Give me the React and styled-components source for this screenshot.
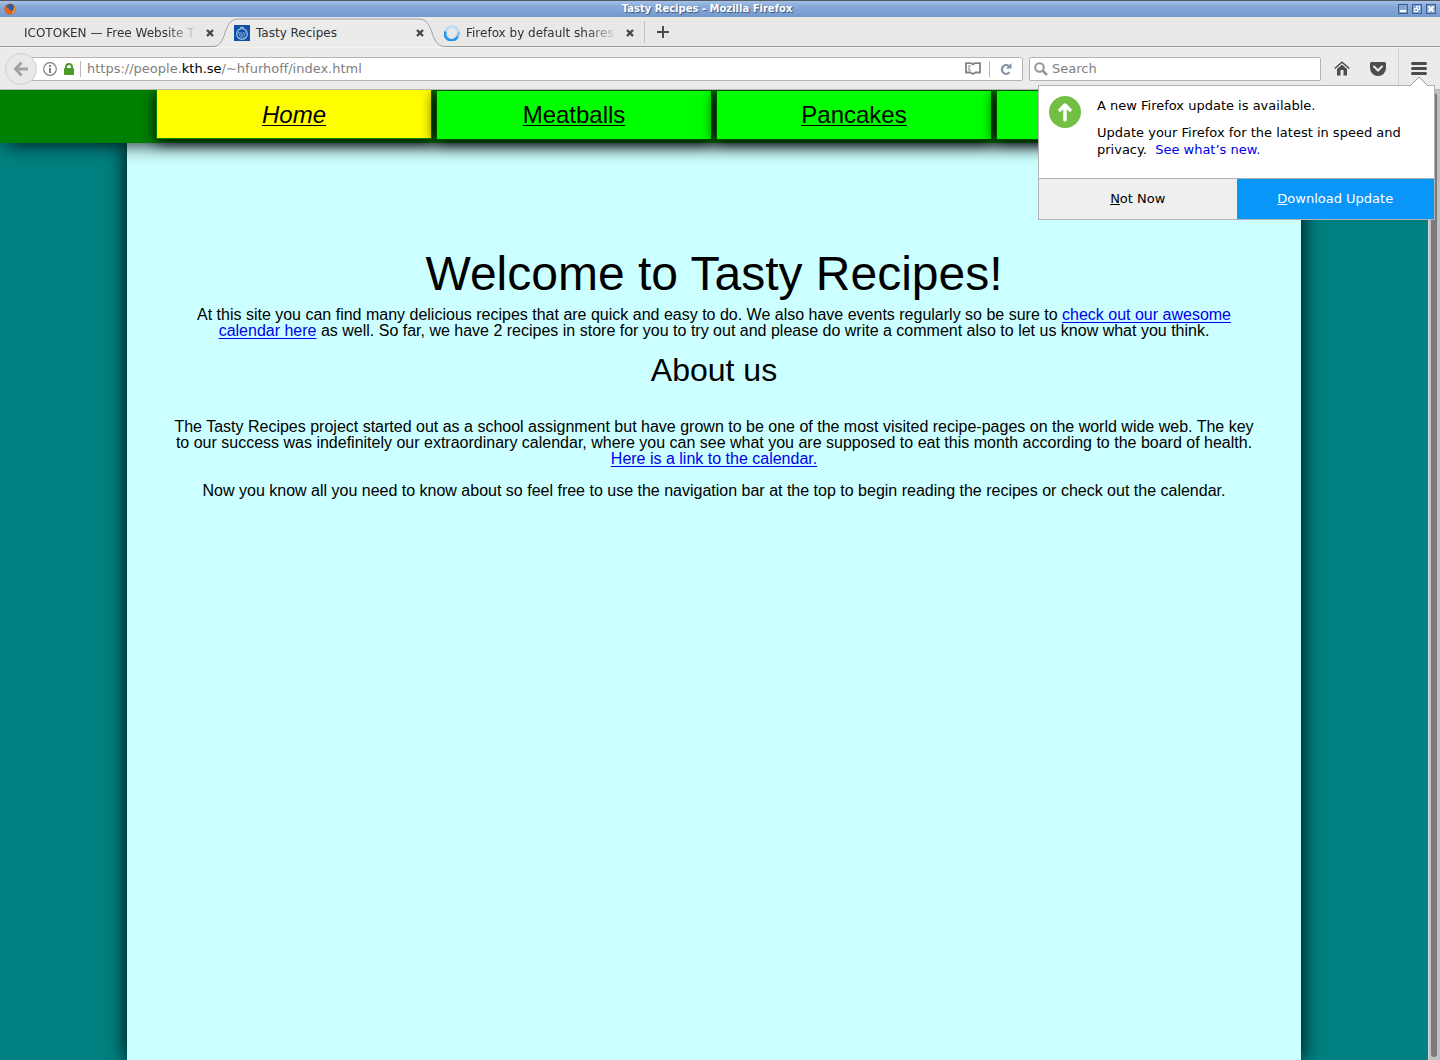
import React from 'react';
import styled, { createGlobalStyle, css } from 'styled-components';

const GlobalStyle = createGlobalStyle`
  *, *::before, *::after { box-sizing: border-box; }
  body { margin: 0; }
  button, input { font: inherit; color: inherit; margin: 0; }
`;

const Window = styled.div`
  display: flex;
  flex-direction: column;
  min-height: 100vh;
  background: #ebebe9;
  font: 13px/17px 'DejaVu Sans', sans-serif;
  color: #2e3436;
`;

const TitleBar = styled.header`
  display: flex;
  align-items: center;
  height: 17px;
  padding: 0 4px;
  border-top: 1px solid #54585f;
  background: linear-gradient(#a4c2ea, #8aabd9 30%, #7399cd);
`;

const WindowTitle = styled.h1`
  flex: 1;
  margin: 0;
  text-align: center;
  font: bold 10px/16px 'DejaVu Sans', sans-serif;
  color: #fff;
  text-shadow: 1px 1px 1px #3b5680;
`;

const WindowButtons = styled.div`
  display: flex;
  gap: 4px;
`;

const WindowButton = styled.button`
  display: flex;
  width: 10px;
  height: 10px;
  padding: 0;
  border: 0;
  background: none;
`;

const TabStrip = styled.div`
  display: flex;
  height: 30px;
  padding-left: 14px;
  border-bottom: 1px solid #9c9c9a;
  background: #e8e8e6;
  font-size: 12px;
`;

const Tab = styled.div`
  position: relative;
  display: flex;
  align-items: center;
  gap: 6px;
  width: 210px;
  padding: 3px 8px 0 10px;
`;

const TabShape = styled.svg`
  position: absolute;
  top: 1px;
  left: -11px;
  width: 232px;
  height: 30px;
`;

const TabLabel = styled.button`
  position: relative;
  flex: 1;
  min-width: 0;
  padding: 0;
  border: 0;
  background: none;
  white-space: nowrap;
  text-align: left;
  ${({ $faded }) => $faded && css`mask-image: linear-gradient(to left, transparent, #000 32px);`}
`;

const IconSlot = styled.span`
  position: relative;
  display: flex;
  flex: none;
`;

const BareButton = styled.button`
  position: relative;
  display: flex;
  align-items: center;
  justify-content: center;
  flex: none;
  width: ${({ $width }) => $width}px;
  padding: 0;
  border: 0;
  background: none;
`;

const NewTabArea = styled.div`
  display: flex;
  align-items: center;
  align-self: center;
  height: 22px;
  border-left: 1px solid #c0c0be;
`;

const Toolbar = styled.div`
  position: relative;
  display: flex;
  align-items: center;
  height: 43px;
  padding: 0 1px 0 5px;
  border-top: 1px solid #f4f4f3;
  border-bottom: 1px solid #b5b5b3;
`;

const BackButton = styled.button`
  position: relative;
  display: flex;
  align-items: center;
  justify-content: center;
  flex: none;
  width: 32px;
  height: 32px;
  padding: 0;
  border: 1px solid #cfcfcd;
  border-radius: 50%;
  background: #e9e9e7;
`;

const Field = styled.div`
  display: flex;
  align-items: center;
  height: 24px;
  border: 1px solid #b4b4b2;
  border-radius: 2px;
  background: #fff;
`;

const AddressField = styled(Field)`
  flex: 1;
  margin-left: -8px;
  padding: 0 4px 0 12px;
  gap: 4px;
`;

const Divider = styled.span`
  width: 1px;
  height: 16px;
  background: #b8b8b6;
`;

const Address = styled.a`
  flex: 1;
  padding-left: 2px;
  color: #7f7f7f;
  text-decoration: none;
`;

const Host = styled.span`
  color: #000;
`;

const SearchField = styled(Field)`
  width: 292px;
  margin: 0 5px 0 6px;
  padding: 0 4px;
  gap: 4px;
`;

const SearchInput = styled.input`
  flex: 1;
  min-width: 0;
  padding: 0;
  border: 0;
  outline: 0;
  background: none;
  &::placeholder { color: #7f7f7f; opacity: 1; }
`;

const MenuSlot = styled.div`
  display: flex;
  align-self: stretch;
  border-left: 1px solid #d2d2d0;
`;

const UpdatePanel = styled.section`
  position: absolute;
  z-index: 10;
  top: 37px;
  right: 5px;
  width: 397px;
  border: 1px solid #b2b2b2;
  background: #fff;
  color: #000;
`;

const PanelArrow = styled.svg`
  position: absolute;
  top: -10px;
  right: 5px;
  width: 20px;
  height: 11px;
`;

const PanelBody = styled.div`
  display: flex;
  gap: 16px;
  height: 92px;
  padding: 10px;
`;

const PanelText = styled.div`
  flex: 1;

  p { margin: 1px 0 10px; }
`;

const PanelLink = styled.a`
  margin-left: 4px;
  color: #0000ee;
  text-decoration: none;
`;

const PanelActions = styled.div`
  display: flex;
  border-top: 1px solid #b2b2b2;
`;

const PanelButton = styled.button`
  flex: 1;
  height: 40px;
  padding: 0 0 2px;
  border: 0;
  background: ${({ $primary }) => ($primary ? '#0996f8' : '#efefef')};
  color: ${({ $primary }) => ($primary ? '#fff' : '#000')};
`;

const Viewport = styled.div`
  display: flex;
  flex: 1;
`;

const Page = styled.div`
  display: flex;
  flex-direction: column;
  flex: 1;
  min-width: 0;
  overflow: hidden;
  background: #008080;
  color: #000;
  font: 16px/16px 'Liberation Sans', Arial, sans-serif;

  a {
    text-decoration: underline 1px;
    text-decoration-skip-ink: none;
    text-underline-offset: 2px;
  }
`;

const SiteNav = styled.nav`
  position: relative;
  z-index: 1;
  height: 53px;
  padding: 0 156px;
  background: #008000;
  box-shadow: 0 6px 20px -6px #000;
`;

const NavList = styled.div`
  display: grid;
  grid-template-columns: repeat(4, 1fr);
  gap: 4px;
`;

const NavLink = styled.a`
  height: 50px;
  margin-top: ${({ $current }) => ($current ? '-1px' : '0')};
  border: 1px solid ${({ $current }) => ($current ? '#008000' : '#004d00')};
  background: ${({ $current }) => ($current ? '#ffff00' : '#00ff00')};
  box-shadow: 0 3px 14px #000;
  color: #000;
  font-size: 24px;
  line-height: ${({ $current }) => ($current ? 50 : 48)}px;
  font-style: ${({ $current }) => ($current ? 'italic' : 'normal')};
  text-align: center;
`;

const Content = styled.main`
  flex: 1;
  margin: 0 127px;
  padding: 107px 40px 32px;
  background: #ccffff;
  box-shadow: 0 0 20px #000;
  text-align: center;

  a { color: #0000ee; }
`;

const Heading = styled.h2`
  margin: 0 0 9px;
  font-size: 48px;
  line-height: 48px;
  font-weight: normal;
`;

const SubHeading = styled.h3`
  margin: 15px 0 33px;
  font-size: 32px;
  line-height: 32px;
  font-weight: normal;
`;

const Paragraph = styled.p`
  margin: 0 0 ${({ $last }) => ($last ? 0 : 16)}px;
`;

const Intro = styled.p`
  margin: 0;
`;

const ScrollTrack = styled.div`
  width: 12px;
  padding: 3px 3px 3px 2px;
  border-left: 1px solid #dadada;
  background: #c0c0c0;
`;

const ScrollThumb = styled.div`
  height: 100%;
  width: 6px;
  border-radius: 3px;
  background: #787a7b;
`;

const FirefoxIcon = () => (
  <svg width="12" height="12" viewBox="0 0 12 12" aria-hidden="true">
    <circle cx="6" cy="6" r="5.6" fill="#d9581c" />
    <circle cx="6.2" cy="5" r="3.8" fill="#2a5fa8" />
    <path d="M.8 3C2 5 3 3.600 4.500 5.500S7 8.500 10 7A5 5 0 0 1 1 8Z" fill="#e8641b" />
    <path d="M10 2.500Q12 6 10 9q-1 1.500-2.500 2Q10.500 7 10 2.500Z" fill="#f8b62b" />
  </svg>
);

const MinimizeIcon = () => (
  <svg width="10" height="10" viewBox="0 0 10 10" aria-hidden="true">
    <rect x=".5" y=".5" width="9" height="9" fill="#86a5d2" stroke="#3d5f93" />
    <path d="M2 7h6" stroke="#fff" strokeWidth="2" />
  </svg>
);

const RestoreIcon = () => (
  <svg width="10" height="10" viewBox="0 0 10 10" aria-hidden="true">
    <rect x=".5" y=".5" width="9" height="9" fill="#86a5d2" stroke="#3d5f93" />
    <path d="M4.500 4V2.500h3v3H6M2.500 4.500h3v3h-3z" fill="none" stroke="#fff" />
  </svg>
);

const WindowCloseIcon = () => (
  <svg width="10" height="10" viewBox="0 0 10 10" aria-hidden="true">
    <rect x=".5" y=".5" width="9" height="9" fill="#86a5d2" stroke="#3d5f93" />
    <path d="M2.500 2.500l5 5M7.500 2.500l-5 5" stroke="#fff" strokeWidth="2" />
  </svg>
);

const CloseIcon = () => (
  <svg width="8" height="8" viewBox="0 0 8 8" aria-hidden="true">
    <path d="M1 1l6 6M7 1L1 7" stroke="#444a4c" strokeWidth="2.400" />
  </svg>
);

const CrestIcon = () => (
  <svg width="16" height="16" viewBox="0 0 16 16" aria-hidden="true">
    <rect width="16" height="16" fill="#0f4fa5" />
    <circle cx="8" cy="9" r="5.300" fill="none" stroke="#a9c3e6" strokeWidth="1.200" />
    <path d="M6 3.200V1.800l1 .7 1-1.200 1 1.200 1-.7v1.400z" fill="#a9c3e6" />
    <path d="M4 8h8M5 10h6" fill="none" stroke="#c4d6ee" strokeWidth="1.200" strokeDasharray="1.600 .8" />
    <path d="M5.500 12h5" fill="none" stroke="#a9c3e6" strokeWidth=".8" />
  </svg>
);

const ThrobberIcon = () => (
  <svg width="16" height="16" viewBox="0 0 16 16" aria-hidden="true">
    <circle cx="8" cy="8" r="6.500" fill="none" stroke="#b9dbf6" strokeWidth="2.600" />
    <path d="M1.500 6.500A6.500 6.500 0 0 0 13.500 11.500" fill="none" stroke="#1f95f2" strokeWidth="2.600" />
    <path d="M13.500 11.500A6.500 6.500 0 0 0 14.500 7" fill="none" stroke="#7cc0f5" strokeWidth="2.600" />
  </svg>
);

const PlusIcon = () => (
  <svg width="12" height="12" viewBox="0 0 12 12" aria-hidden="true">
    <path d="M6 0v12M0 6h12" stroke="#4c4c4c" strokeWidth="2" />
  </svg>
);

const BackIcon = () => (
  <svg width="16" height="16" viewBox="0 0 16 16" aria-hidden="true">
    <path d="M8.500 1.500L2.500 8l6 6.500M3 8h12" fill="none" stroke="#a3a3a2" strokeWidth="3" />
  </svg>
);

const InfoIcon = () => (
  <svg width="14" height="14" viewBox="0 0 14 14" aria-hidden="true">
    <circle cx="7" cy="7" r="6.300" fill="none" stroke="#808080" strokeWidth="1.200" />
    <path d="M7 3v2M7 6v5" stroke="#808080" strokeWidth="2" />
  </svg>
);

const LockIcon = () => (
  <svg width="10" height="12" viewBox="0 0 10 12" aria-hidden="true">
    <rect y="5" width="10" height="7" rx="1" fill="#4d9a26" />
    <path d="M2 6V4a3 3 0 0 1 6 0v2" fill="none" stroke="#4d9a26" strokeWidth="2" />
  </svg>
);

const ReaderIcon = () => (
  <svg width="16" height="13" viewBox="0 0 16 13" aria-hidden="true">
    <path d="M1 1.200h5.200L8 2.400l1.800-1.200H15v9.300h-4.500L8 12l-2.500-1.500H1z" fill="none" stroke="#858585" strokeWidth="1.800" />
    <path d="M3 4h3M3 6h2M3 8h3" stroke="#858585" />
  </svg>
);

const ReloadIcon = () => (
  <svg width="12" height="12" viewBox="0 0 12 12" aria-hidden="true">
    <path d="M9 3.200A4.300 4.300 0 1 0 9.500 9.300" fill="none" stroke="#8193a5" strokeWidth="2.200" />
    <path d="M11.500 0v5.500H6z" fill="#8193a5" />
  </svg>
);

const SearchIcon = () => (
  <svg width="14" height="14" viewBox="0 0 14 14" aria-hidden="true">
    <circle cx="5.500" cy="5.500" r="4.300" fill="none" stroke="#959595" strokeWidth="2" />
    <path d="M8.500 8.500l4.500 4.500" stroke="#959595" strokeWidth="2.500" />
  </svg>
);

const HomeIcon = () => (
  <svg width="16" height="15" viewBox="0 0 16 15" aria-hidden="true">
    <path d="M.7 7.500L8 1.200l7.300 6.300" fill="none" stroke="#4c4c4c" strokeWidth="1.500" />
    <path d="M3 8l5-4.300L13 8v6.500H9.500V9h-3v5.500H3z" fill="#4c4c4c" />
  </svg>
);

const PocketIcon = () => (
  <svg width="16" height="14" viewBox="0 0 16 14" aria-hidden="true">
    <path d="M1.500 0h13Q16 0 16 1.500V6A8 8 0 0 1 0 6V1.500Q0 0 1.500 0z" fill="#4c4c4c" />
    <path d="M4 4.500l4 4 4-4" fill="none" stroke="#ebebe9" strokeWidth="2" strokeLinecap="round" />
  </svg>
);

const MenuIcon = () => (
  <svg width="16" height="13" viewBox="0 0 16 13" aria-hidden="true">
    <path d="M1.500 1.500h13M1.500 6.500h13M1.500 11.500h13" stroke="#4c4c4c" strokeWidth="3" strokeLinecap="round" />
  </svg>
);

const UpdateIcon = () => (
  <svg width="32" height="32" viewBox="0 0 32 32" aria-hidden="true">
    <circle cx="16" cy="16" r="16" fill="#73bf43" />
    <path d="M16 24V10M11 14l5-5 5 5" fill="none" stroke="#fff" strokeWidth="3.500" strokeLinecap="round" strokeLinejoin="round" />
  </svg>
);

const NAV_ITEMS = [
  { label: 'Home', current: true },
  { label: 'Meatballs' },
  { label: 'Pancakes' },
  { label: 'Calendar' },
];

export default function App() {
  return (
    <Window>
      <GlobalStyle />
      <TitleBar>
        <FirefoxIcon />
        <WindowTitle>Tasty Recipes - Mozilla Firefox</WindowTitle>
        <WindowButtons>
          <WindowButton aria-label="Minimize"><MinimizeIcon /></WindowButton>
          <WindowButton aria-label="Restore"><RestoreIcon /></WindowButton>
          <WindowButton aria-label="Close window"><WindowCloseIcon /></WindowButton>
        </WindowButtons>
      </TitleBar>

      <TabStrip>
        <Tab>
          <TabLabel $faded>ICOTOKEN — Free Website T</TabLabel>
          <BareButton $width={12} aria-label="Close tab"><CloseIcon /></BareButton>
        </Tab>
        <Tab>
          <TabShape viewBox="0 0 232 30" aria-hidden="true">
            <path d="M0 30V28.500C15 28.500 9 1 25 1H206C222 1 216 28.500 232 28.500V30Z" fill="#ebebe9" />
            <path d="M0 28.500C15 28.500 9 1 25 1H206C222 1 216 28.500 232 28.500" fill="none" stroke="#9fa2a8" />
          </TabShape>
          <IconSlot><CrestIcon /></IconSlot>
          <TabLabel>Tasty Recipes</TabLabel>
          <BareButton $width={12} aria-label="Close tab"><CloseIcon /></BareButton>
        </Tab>
        <Tab>
          <IconSlot><ThrobberIcon /></IconSlot>
          <TabLabel $faded>Firefox by default shares</TabLabel>
          <BareButton $width={12} aria-label="Close tab"><CloseIcon /></BareButton>
        </Tab>
        <NewTabArea>
          <BareButton $width={35} aria-label="New tab"><PlusIcon /></BareButton>
        </NewTabArea>
      </TabStrip>

      <Toolbar>
        <BackButton aria-label="Back"><BackIcon /></BackButton>
        <AddressField>
          <BareButton $width={16} aria-label="Site information"><InfoIcon /></BareButton>
          <BareButton $width={14} aria-label="Secure connection"><LockIcon /></BareButton>
          <Divider />
          <Address href="#address">https://people.<Host>kth.se</Host>/~hfurhoff/index.html</Address>
          <BareButton $width={24} aria-label="Reader view"><ReaderIcon /></BareButton>
          <Divider />
          <BareButton $width={24} aria-label="Reload"><ReloadIcon /></BareButton>
        </AddressField>
        <SearchField>
          <SearchIcon />
          <SearchInput type="search" placeholder="Search" aria-label="Search" />
        </SearchField>
        <BareButton $width={32} aria-label="Home page"><HomeIcon /></BareButton>
        <BareButton $width={40} aria-label="Save to Pocket"><PocketIcon /></BareButton>
        <MenuSlot>
          <BareButton $width={40} aria-label="Open menu"><MenuIcon /></BareButton>
        </MenuSlot>

        <UpdatePanel>
          <PanelArrow viewBox="0 0 20 11" aria-hidden="true">
            <path d="M0 11L10 1l10 10z" fill="#fff" />
            <path d="M1 10l9-9 9 9" fill="none" stroke="#9a9a9a" />
          </PanelArrow>
          <PanelBody>
            <UpdateIcon />
            <PanelText>
              <p>A new Firefox update is available.</p>
              <p>
                Update your Firefox for the latest in speed and privacy.{' '}
                <PanelLink href="#whats-new">See what’s new.</PanelLink>
              </p>
            </PanelText>
          </PanelBody>
          <PanelActions>
            <PanelButton><u>N</u>ot Now</PanelButton>
            <PanelButton $primary><u>D</u>ownload Update</PanelButton>
          </PanelActions>
        </UpdatePanel>
      </Toolbar>

      <Viewport>
        <Page>
          <SiteNav>
            <NavList>
              {NAV_ITEMS.map(({ label, current }) => (
                <NavLink key={label} href={`#${label}`} $current={current}>{label}</NavLink>
              ))}
            </NavList>
          </SiteNav>
          <Content>
            <Heading>Welcome to Tasty Recipes!</Heading>
            <Intro>
              At this site you can find many delicious recipes that are quick and easy to do. We also have events
              regularly so be sure to <a href="#calendar">check out our awesome calendar here</a> as well. So far, we
              have 2 recipes in store for you to try out and please do write a comment also to let us know what you
              think.
            </Intro>
            <SubHeading>About us</SubHeading>
            <Paragraph>
              The Tasty Recipes project started out as a school assignment but have grown to be one of the most
              visited recipe-pages on the world wide web. The key to our success was indefinitely our extraordinary
              calendar, where you can see what you are supposed to eat this month according to the board of health.{' '}
              <a href="#calendar">Here is a link to the calendar.</a>
            </Paragraph>
            <Paragraph $last>
              Now you know all you need to know about so feel free to use the navigation bar at the top to begin
              reading the recipes or check out the calendar.
            </Paragraph>
          </Content>
        </Page>
        <ScrollTrack><ScrollThumb /></ScrollTrack>
      </Viewport>
    </Window>
  );
}
